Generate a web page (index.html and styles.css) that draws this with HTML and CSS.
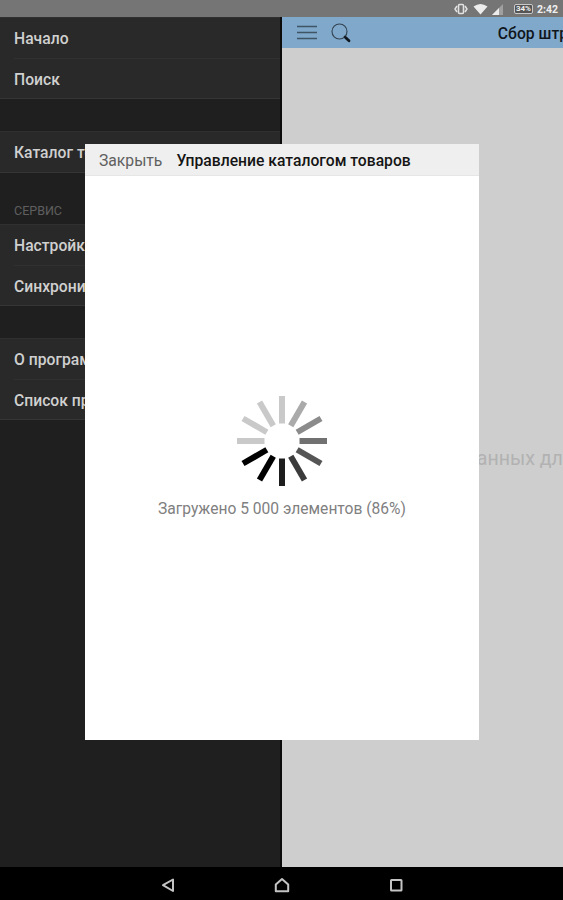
FILE: index.html
```
<!DOCTYPE html>
<html lang="ru">
<head>
    <meta charset="UTF-8">
    <meta name="viewport" content="width=device-width, initial-scale=1.0">
    <title>Управление каталогом товаров</title>
    <link rel="stylesheet" href="styles.css">
</head>
<body>
    <div class="status-bar">
        <svg class="icon-vibrate" width="14" height="12" viewBox="0 0 14 12">
            <rect x="4.5" y="1.5" width="5" height="9" rx="1" fill="none" stroke="#e2e2e2" stroke-width="1.6"/>
            <path d="M3 3L1 6l2 3M11 3l2 3-2 3" fill="none" stroke="#e2e2e2" stroke-width="1.5"/>
        </svg>
        <svg class="icon-wifi" width="15" height="12" viewBox="0 0 15 12">
            <path d="M0.5 3.5Q7.5-1.5 14.5 3.5L7.5 11.5z" fill="#ededed"/>
        </svg>
        <svg class="icon-signal" width="12" height="11" viewBox="0 0 12 11">
            <path d="M0 11L11 0v11z" fill="#a0a0a0"/>
            <path d="M0 11L7 4v7z" fill="#ededed"/>
        </svg>
        <span class="battery">34%</span>
        <span class="time">2:42</span>
    </div>

    <div class="screen">
        <nav class="panel">
            <ul class="list">
                <li>Начало</li>
                <li>Поиск</li>
            </ul>
            <ul class="list">
                <li>Каталог товаров</li>
            </ul>
            <h3 class="list-title">СЕРВИС</h3>
            <ul class="list">
                <li>Настройки</li>
                <li>Синхронизация</li>
            </ul>
            <ul class="list">
                <li>О программе</li>
                <li>Список продуктов</li>
            </ul>
        </nav>

        <main class="page">
            <header class="navbar">
                <div class="navbar-left">
                    <svg class="icon-menu" width="20" height="15" viewBox="0 0 20 15">
                        <path d="M0 1.5h20M0 7.5h20M0 13.5h20" stroke="#3f5565" stroke-width="1.5"/>
                    </svg>
                    <svg class="icon-search" width="20" height="20" viewBox="0 0 20 20">
                        <circle cx="8.5" cy="8.5" r="7.5" fill="none" stroke="#33434f" stroke-width="1.1"/>
                        <path d="M13 13l2 2" stroke="#222b33" stroke-width="1.5"/>
                        <path d="M14.5 14.5l3.5 3.3" stroke="#111820" stroke-width="2.8" stroke-linecap="round"/>
                    </svg>
                </div>
                <h1>Сбор штрихкодов</h1>
            </header>
            <p class="empty">Нет данных для отображения</p>
        </main>
    </div>

    <!-- Всплывающее окно -->
    <section class="popup">
        <header class="popup-header">
            <a class="close">Закрыть</a>
            <h2>Управление каталогом товаров</h2>
        </header>
        <div class="popup-content">
            <svg class="spinner" width="92" height="92" viewBox="-46 -46 92 92" stroke-width="6">
                <path d="M0-17.5V-45" stroke="#c9c9c9"/>
                <path d="M0-17.5V-45" stroke="#aaaaaa" transform="rotate(30)"/>
                <path d="M0-17.5V-45" stroke="#8b8b8b" transform="rotate(60)"/>
                <path d="M0-17.5V-45" stroke="#717171" transform="rotate(90)"/>
                <path d="M0-17.5V-45" stroke="#555555" transform="rotate(120)"/>
                <path d="M0-17.5V-45" stroke="#3b3b3b" transform="rotate(150)"/>
                <path d="M0-17.5V-45" stroke="#1d1d1d" transform="rotate(180)"/>
                <path d="M0-17.5V-45" stroke="#000000" transform="rotate(210)"/>
                <path d="M0-17.5V-45" stroke="#000000" transform="rotate(240)"/>
                <path d="M0-17.5V-45" stroke="#c9c9c9" transform="rotate(270)"/>
                <path d="M0-17.5V-45" stroke="#c9c9c9" transform="rotate(300)"/>
                <path d="M0-17.5V-45" stroke="#c9c9c9" transform="rotate(330)"/>
            </svg>
            <p>Загружено 5 000 элементов (86%)</p>
        </div>
    </section>

    <footer class="nav-buttons">
        <svg width="16" height="16" viewBox="0 0 16 16">
            <path d="M13 2.5v11.500L3 8.2z"/>
        </svg>
        <svg width="16" height="16" viewBox="0 0 16 16">
            <path d="M1.8 7.5L8 2l6.2 5.5v6.7H1.8z"/>
        </svg>
        <svg width="16" height="16" viewBox="0 0 16 16">
            <rect x="3" y="3" width="10.5" height="10.5" rx="0.5"/>
        </svg>
    </footer>
</body>
</html>
```
FILE: styles.css
```
* {
    margin: 0;
    padding: 0;
    box-sizing: border-box;
}

body {
    display: flex;
    flex-direction: column;
    position: relative;
    height: 900px;
    overflow: hidden;
    font-family: Roboto, "Liberation Sans", sans-serif;
    background: #000;
}

/* Строка состояния */
.status-bar {
    display: flex;
    align-items: center;
    justify-content: flex-end;
    height: 17px;
    padding: 1px 5px 0 0;
    background: #757575;
    color: #efefef;
    font-size: 11px;
    font-weight: bold;
}

.icon-wifi {
    margin-left: 5px;
}

.icon-signal {
    margin-left: 4px;
}

.battery {
    width: 19px;
    height: 10px;
    margin-left: 10px;
    border: 1px solid #c8c8c8;
    border-radius: 2px;
    background: #555;
    font-size: 8px;
    line-height: 8px;
    text-align: center;
}

.time {
    margin-left: 4px;
    font-size: 10.5px;
}

.screen {
    display: flex;
    flex: 1;
    overflow: hidden;
}

/* Боковая панель */
.panel {
    flex: none;
    width: 282px;
    background: #1f1f1f;
    border-right: 2px solid #0c0c0c;
}

.list {
    list-style: none;
    margin-bottom: 32px;
    background: #292929;
    border-bottom: 1px solid #353535;
    border-top: 1px solid #303030;
}

.list li {
    height: 40px;
    padding-left: 14px;
    line-height: 41px;
    font-size: 15.7px;
    font-weight: 500;
    color: #d0d0d0;
    white-space: nowrap;
}

.list li + li {
    margin-left: 14px;
    padding-left: 0;
    border-top: 1px solid #303030;
}

.list-title {
    margin: -1px 0 6px 14px;
    font-size: 12.5px;
    line-height: 14px;
    font-weight: normal;
    color: #5f5f5f;
}

/* Основная страница */
.page {
    display: flex;
    flex-direction: column;
    flex: none;
    width: 563px;
    background: #cecece;
}

.navbar {
    display: grid;
    grid-template-columns: 1fr auto 1fr;
    align-items: center;
    height: 31px;
    padding: 0 15px;
    background: #7fa8cb;
}

.navbar-left {
    display: flex;
    align-items: center;
    gap: 14px;
}

.navbar h1 {
    padding-top: 2px;
    font-size: 15.7px;
    font-weight: 500;
    color: #10161c;
}

.empty {
    margin: auto;
    padding-top: 1px;
    font-size: 19.6px;
    color: #b2b2b2;
}

/* Всплывающее окно */
.popup {
    position: absolute;
    top: 144px;
    left: 85px;
    display: flex;
    flex-direction: column;
    width: 394px;
    height: 596px;
    background: #fff;
}

.popup-header {
    display: flex;
    align-items: center;
    gap: 14px;
    height: 32px;
    padding: 2px 0 0 14px;
    background: #efefef;
    border-bottom: 1px solid #e6e6e6;
}

.close {
    font-size: 15.7px;
    color: #606060;
}

.popup-header h2 {
    font-size: 15.7px;
    font-weight: 500;
    color: #151515;
}

.popup-content {
    display: flex;
    flex-direction: column;
    align-items: center;
    padding-top: 219px;
}

.popup-content p {
    margin-top: 13px;
    font-size: 15.6px;
    color: #808080;
}

/* Кнопки навигации */
.nav-buttons {
    display: flex;
    align-items: center;
    justify-content: center;
    gap: 98px;
    height: 33px;
    padding-top: 2px;
}

.nav-buttons svg {
    fill: none;
    stroke: #c4c4c4;
    stroke-width: 2;
    stroke-linejoin: round;
}
```
